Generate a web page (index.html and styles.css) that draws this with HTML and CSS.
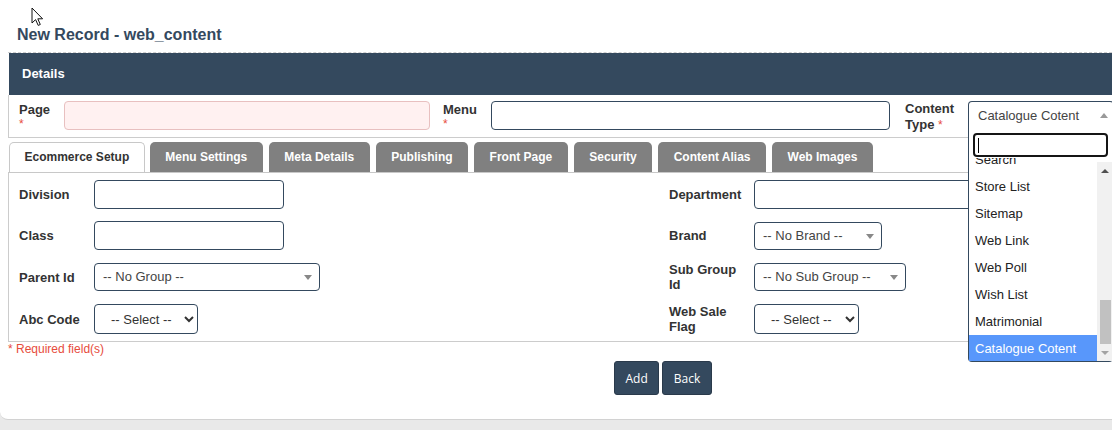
FILE: index.html
```html
<!DOCTYPE html>
<html>
<head>
<meta charset="utf-8">
<title>New Record - web_content</title>
<link rel="stylesheet" href="styles.css">
</head>
<body>
<div class="page">
  <svg class="cursor" width="14" height="20" viewBox="0 0 14 20">
    <path d="M1 1 L1 16 L4.6 12.6 L7.2 18.4 L9.3 17.5 L6.8 11.8 L11.6 11.8 Z" fill="#fff" stroke="#111" stroke-width="1" stroke-linejoin="miter"/>
  </svg>

  <h1 class="title">New Record - web_content</h1>

  <div class="panel">
    <div class="bar">Details</div>

    <div class="head-row">
      <label class="lbl lbl-page">Page<span class="req">*</span></label>
      <input class="inp inp-page" type="text">
      <label class="lbl lbl-menu">Menu<span class="req">*</span></label>
      <input class="inp inp-menu" type="text">
      <label class="lbl lbl-type">Content<br>Type <span class="req-inline">*</span></label>
      <div class="s2-open">
        <div class="s2-box">Catalogue Cotent<span class="tri tri-up"></span></div>
        <div class="s2-drop">
          <div class="s2-search-wrap"><div class="s2-search"><span class="caret"></span></div></div>
          <div class="s2-list">
            <ul class="s2-results">
              <li>Search</li>
              <li>Store List</li>
              <li>Sitemap</li>
              <li>Web Link</li>
              <li>Web Poll</li>
              <li>Wish List</li>
              <li>Matrimonial</li>
              <li class="hl">Catalogue Cotent</li>
            </ul>
            <div class="sbar">
              <div class="sbtn"><span class="arr arr-up"></span></div>
              <div class="strack"><div class="sthumb"></div></div>
              <div class="sbtn"><span class="arr arr-down"></span></div>
            </div>
          </div>
        </div>
      </div>
    </div>

    <div class="tabs">
      <div class="tab active">Ecommerce Setup</div>
      <div class="tab">Menu Settings</div>
      <div class="tab">Meta Details</div>
      <div class="tab">Publishing</div>
      <div class="tab">Front Page</div>
      <div class="tab">Security</div>
      <div class="tab">Content Alias</div>
      <div class="tab">Web Images</div>
    </div>

    <div class="tab-panel">
      <label class="lbl">Division</label>
      <div><input class="inp inp-sm" type="text"></div>
      <label class="lbl">Department</label>
      <div><input class="inp inp-dept" type="text"></div>

      <label class="lbl">Class</label>
      <div><input class="inp inp-sm" type="text"></div>
      <label class="lbl">Brand</label>
      <div><div class="s2 s2-brand">-- No Brand --<span class="tri"></span></div></div>

      <label class="lbl">Parent Id</label>
      <div><div class="s2 s2-parent">-- No Group --<span class="tri"></span></div></div>
      <label class="lbl">Sub Group<br>Id</label>
      <div><div class="s2 s2-sub">-- No Sub Group --<span class="tri"></span></div></div>

      <label class="lbl">Abc Code</label>
      <div><select class="nsel nsel-abc"><option>-- Select --</option></select></div>
      <label class="lbl">Web Sale<br>Flag</label>
      <div><select class="nsel nsel-web"><option>-- Select --</option></select></div>
    </div>
  </div>

  <div class="req-note">* Required field(s)</div>

  <div class="actions">
    <button class="btn btn-add">Add</button>
    <button class="btn btn-back">Back</button>
  </div>
</div>
</body>
</html>
```

FILE: styles.css
```css
* { box-sizing: border-box; }
html, body { margin: 0; padding: 0; }
body {
  background: #e9e9e9;
  font-family: "Liberation Sans", Arial, sans-serif;
  color: #333;
  overflow: hidden;
}
.page {
  position: relative;
  height: 420px;
  background: #fff;
  border-bottom: 1px solid #d2d2d2;
  border-bottom-left-radius: 8px;
  overflow: hidden;
}
.cursor { position: absolute; left: 31px; top: 7px; }

.title {
  margin: 0;
  padding: 25px 0 0 17px;
  font-size: 16px;
  line-height: 20px;
  font-weight: bold;
  color: #34495e;
}

.panel {
  margin: 7px 0 0 8px;
  border-top: 1px dashed #cfcfcf;
}
.bar {
  height: 42px;
  margin-left: 1px;
  background: #34495e;
  color: #fff;
  font-weight: bold;
  font-size: 13px;
  line-height: 42px;
  padding-left: 13px;
}

.lbl {
  font-size: 13px;
  font-weight: bold;
  line-height: 15px;
  color: #333;
}
.req {
  display: block;
  color: #e74c3c;
  font-size: 12px;
  font-weight: normal;
  line-height: 15px;
}
.req-inline { color: #e74c3c; font-weight: normal; font-size: 12px; }

.inp {
  display: block;
  height: 29px;
  border: 1px solid #34495e;
  border-radius: 4px;
  background: #fff;
  font: 13px "Liberation Sans", Arial, sans-serif;
  padding: 0 6px;
  outline: none;
}

.head-row {
  display: flex;
  align-items: flex-start;
  padding: 6px 0 7px 10px;
  border-left: 1px solid #ccc;
  border-bottom: 1px solid #ccc;
  height: 43px;
}
.head-row > * { flex-shrink: 0; }
.lbl-page { width: 45px; padding-top: 1px; }
.inp-page { width: 366px; background: #fff1f1; border-color: #e8c0c0; }
.lbl-menu { width: 48px; margin-left: 13px; padding-top: 1px; }
.inp-menu { width: 399px; }
.lbl-type { width: 63px; margin-left: 15px; line-height: 16px; }

.s2-open { position: relative; width: 146px; height: 28px; }
.s2-box {
  height: 28px;
  border: 1px solid #34495e;
  border-bottom: none;
  border-radius: 4px 4px 0 0;
  padding-left: 9px;
  font-size: 13px;
  line-height: 27px;
  color: #444;
  position: relative;
}
.tri {
  position: absolute;
  right: 9px;
  top: 12px;
  width: 0; height: 0;
  border-left: 4px solid transparent;
  border-right: 4px solid transparent;
  border-top: 5px solid #888;
}
.s2-box .tri-up {
  right: 5px;
  top: 11px;
  border-top: none;
  border-bottom: 5px solid #999;
}
.s2-drop {
  position: absolute;
  top: 28px;
  left: 0;
  width: 145px;
  background: #fff;
  border: 1px solid #34495e;
  border-top: none;
  border-radius: 0 0 4px 4px;
  z-index: 5;
}
.s2-search-wrap { padding: 4px 4px 1px 4px; }
.s2-search {
  width: 135px;
  height: 24px;
  border: 2px solid #151515;
  border-radius: 4px;
  padding: 3px 0 0 3px;
}
.caret { display: block; width: 1px; height: 15px; background: #000; }
.s2-list { display: flex; height: 203px; overflow: hidden; }
.s2-results {
  list-style: none;
  margin: -12px 0 0 0;
  padding: 0;
  flex: 1;
}
.s2-results li {
  height: 27px;
  line-height: 27px;
  padding-left: 6px;
  font-size: 13px;
  color: #222;
}
.s2-results li.hl { background: #5897fb; color: #fff; }
.sbar {
  width: 15px;
  margin-top: 4px;
  background: #f1f1f1;
  display: flex;
  flex-direction: column;
}
.sbtn { height: 17px; display: flex; align-items: center; justify-content: center; }
.strack { flex: 1; display: flex; flex-direction: column; justify-content: flex-end; align-items: center; }
.sthumb { width: 11px; height: 44px; background: #c1c1c1; margin-left: 1px; }
.arr { width: 0; height: 0; border-left: 4px solid transparent; border-right: 4px solid transparent; }
.arr-up { border-bottom: 4px solid #505050; }
.arr-down { border-top: 4px solid #a3a3a3; }

.tabs {
  display: flex;
  gap: 6px;
  margin: 4px 0 0 1px;
  height: 30px;
}
.tab {
  height: 30px;
  padding: 0 15.5px;
  background: #808080;
  color: #fff;
  font-size: 12px;
  font-weight: bold;
  line-height: 30px;
  border-radius: 5px 5px 0 0;
  white-space: nowrap;
}
.tab.active {
  background: #fff;
  color: #333;
  border: 1px solid #c8c8c8;
  border-bottom: none;
  padding: 0 14.5px;
  line-height: 29px;
  margin-right: -1px;
}

.tab-panel {
  display: grid;
  grid-template-columns: 75px 575px 85px 1fr;
  grid-template-rows: 29px 29px 30px 30px;
  row-gap: 12px;
  align-items: center;
  padding: 7px 0 7px 10px;
  border-top: 1px solid #c8c8c8;
  border-left: 1px solid #ccc;
  border-bottom: 1px solid #ccc;
}
.inp-sm { width: 190px; }
.inp-dept { width: 300px; }

.s2 {
  position: relative;
  height: 28px;
  border: 1px solid #34495e;
  border-radius: 4px;
  padding-left: 8px;
  font-size: 13px;
  line-height: 26px;
  color: #444;
  background: #fff;
}
.s2 .tri { top: 11px; right: 7px; }
.s2-parent { width: 226px; }
.s2-brand { width: 128px; }
.s2-sub { width: 152px; }

.nsel {
  display: block;
  height: 30px;
  border: 1px solid #34495e;
  border-radius: 4px;
  background: #fff;
  font: 13px "Liberation Sans", Arial, sans-serif;
  color: #333;
  padding: 0 4px 0 12px;
}
.nsel-abc { width: 104px; }
.nsel-web { width: 105px; }

.req-note {
  margin-left: 8px;
  font-size: 12px;
  line-height: 14px;
  color: #e74c3c;
}

.actions {
  display: flex;
  gap: 3px;
  margin-top: 5px;
  padding-left: 614px;
}
.btn {
  height: 34px;
  padding: 0 10.5px;
  background: #34495e;
  border: 1px solid #2a3a4b;
  border-radius: 3px;
  color: #fff;
  font-family: "Open Sans", "Liberation Sans", sans-serif;
  font-size: 12px;
}
```
